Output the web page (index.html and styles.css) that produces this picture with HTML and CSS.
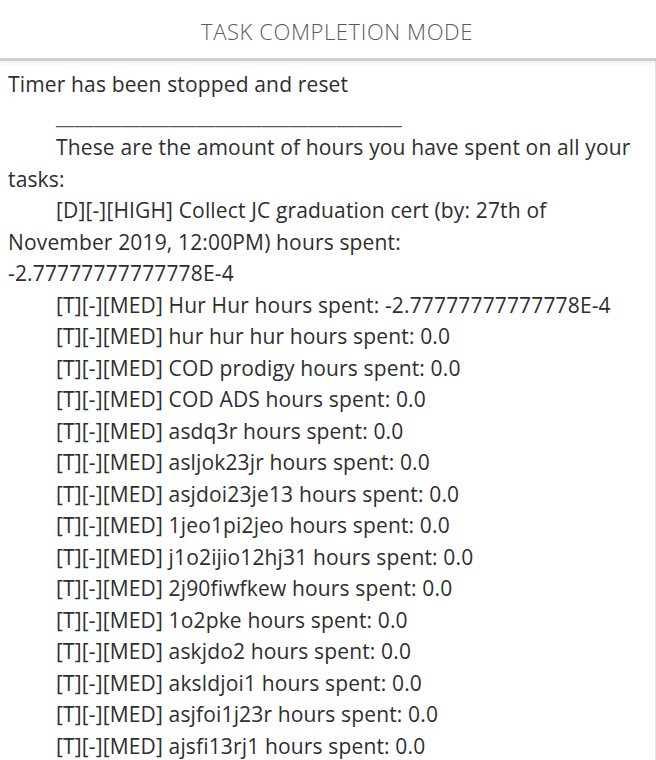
FILE: index.html
```html
<!DOCTYPE html>
<html lang="en">
<head>
<meta charset="utf-8">
<title>Task Completion Mode</title>
<link rel="stylesheet" href="styles.css">
</head>
<body>
<div class="app">
  <header class="mode-header">
    <h1 class="mode-title">TASK COMPLETION MODE</h1>
  </header>
  <main class="output">
    <div class="line">Timer has been stopped and reset</div>
    <div class="line tab rule">_____________________________________</div>
    <div class="line tab">These are the amount of hours you have spent on all your</div>
    <div class="line">tasks:</div>
    <div class="line tab">[D][-][HIGH] Collect JC graduation cert (by: 27th of</div>
    <div class="line">November 2019, 12:00PM) hours spent:</div>
    <div class="line">-2.77777777777778E-4</div>
    <div class="line tab">[T][-][MED] Hur Hur hours spent: -2.77777777777778E-4</div>
    <div class="line tab">[T][-][MED] hur hur hur hours spent: 0.0</div>
    <div class="line tab">[T][-][MED] COD prodigy hours spent: 0.0</div>
    <div class="line tab">[T][-][MED] COD ADS hours spent: 0.0</div>
    <div class="line tab">[T][-][MED] asdq3r hours spent: 0.0</div>
    <div class="line tab">[T][-][MED] asljok23jr hours spent: 0.0</div>
    <div class="line tab">[T][-][MED] asjdoi23je13 hours spent: 0.0</div>
    <div class="line tab">[T][-][MED] 1jeo1pi2jeo hours spent: 0.0</div>
    <div class="line tab">[T][-][MED] j1o2ijio12hj31 hours spent: 0.0</div>
    <div class="line tab">[T][-][MED] 2j90fiwfkew hours spent: 0.0</div>
    <div class="line tab">[T][-][MED] 1o2pke hours spent: 0.0</div>
    <div class="line tab">[T][-][MED] askjdo2 hours spent: 0.0</div>
    <div class="line tab">[T][-][MED] aksldjoi1 hours spent: 0.0</div>
    <div class="line tab">[T][-][MED] asjfoi1j23r hours spent: 0.0</div>
    <div class="line tab">[T][-][MED] ajsfi13rj1 hours spent: 0.0</div>
  </main>
</div>
</body>
</html>
```
FILE: styles.css
```css
html, body {
  margin: 0;
  padding: 0;
  background: #ffffff;
  height: 100%;
  overflow: hidden;
}

.app {
  display: flex;
  flex-direction: column;
  height: 760px;
  width: 656px;
}

.mode-header {
  height: 61px;
  flex: none;
  display: flex;
  align-items: center;
  justify-content: center;
  padding-left: 18px;
  box-sizing: border-box;
  border-bottom: 3px solid #cfcfcf;
  box-shadow: 0 3px 4px rgba(0, 0, 0, 0.06);
  position: relative;
  z-index: 1;
}

.mode-title {
  margin: 0;
  font-family: "Open Sans", "Noto Sans", sans-serif;
  font-weight: 300;
  font-size: 22px;
  letter-spacing: 0.6px;
  color: #5a5a5a;
  padding-top: 4px;
}

.output {
  flex: 1;
  padding: 8px 0 0 8px;
  border-right: 1px solid #e6e6e6;
  font-family: "Open Sans", "Noto Sans", sans-serif;
  font-size: 21px;
  line-height: 31.5px;
  color: #2e2e2e;
  letter-spacing: 0.15px;
}

.line {
  white-space: nowrap;
}

.tab {
  padding-left: 48px;
}

.rule {
  color: #555555;
}
```
